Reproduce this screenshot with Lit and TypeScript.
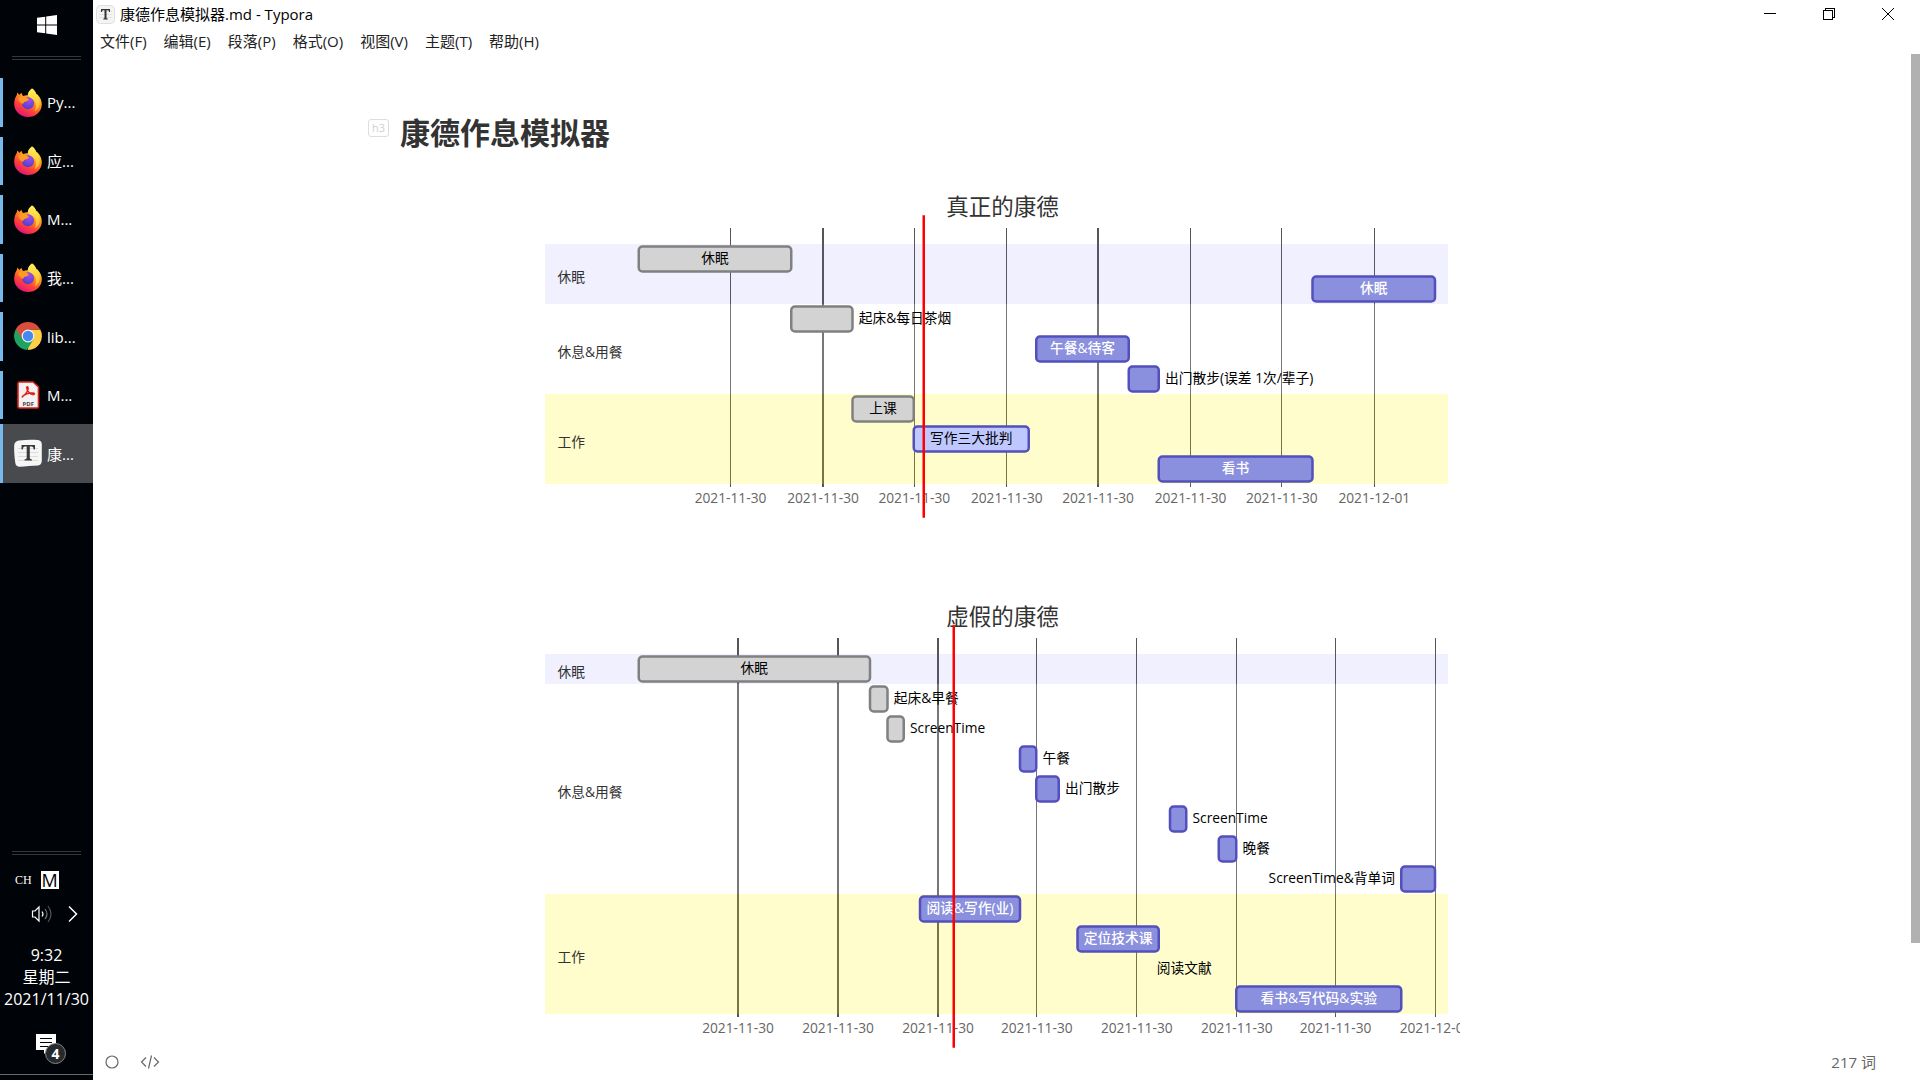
import { LitElement, css, html, svg, nothing } from "lit";
import { customElement, property } from "lit/decorators.js";

type State = "done" | "active" | "todo" | "hidden";
type Side = "in" | "right" | "left";

interface Task {
  name: string;
  start: number;
  end: number;
  state: State;
  label: Side;
}

interface Section {
  name: string;
  tint: string;
  rows: number;
}

interface Plan {
  title: string;
  from: number;
  to: number;
  now: number;
  sections: Section[];
  tasks: Task[];
}

const task = (name: string, start: number, end: number, state: State, label: Side): Task => ({
  name,
  start,
  end,
  state,
  label,
});

/* Hours are counted from midnight; a task's row is its place in the list. */
const PLANS: Plan[] = [
  {
    title: "真正的康德",
    from: 0.01,
    to: 26,
    now: 9.3,
    sections: [
      { name: "休眠", tint: "s0", rows: 2 },
      { name: "休息&用餐", tint: "s1", rows: 3 },
      { name: "工作", tint: "s2", rows: 3 },
    ],
    tasks: [
      task("休眠", 0.01, 5, "done", "in"),
      task("休眠", 22, 26, "todo", "in"),
      task("起床&每日茶烟", 5, 7, "done", "right"),
      task("午餐&待客", 13, 16, "todo", "in"),
      task("出门散步(误差 1次/辈子)", 16, 17, "todo", "right"),
      task("上课", 7, 9, "done", "in"),
      task("写作三大批判", 9, 12.75, "active", "in"),
      task("看书", 17, 22, "todo", "in"),
    ],
  },
  {
    title: "虚假的康德",
    from: 0.01,
    to: 24,
    now: 9.5,
    sections: [
      { name: "休眠", tint: "s0", rows: 1 },
      { name: "休息&用餐", tint: "s1", rows: 7 },
      { name: "工作", tint: "s2", rows: 4 },
    ],
    tasks: [
      task("休眠", 0.01, 6.98, "done", "in"),
      task("起床&早餐", 6.98, 7.5, "done", "right"),
      task("ScreenTime", 7.5, 8, "done", "right"),
      task("午餐", 11.5, 12, "todo", "right"),
      task("出门散步", 12, 12.66, "todo", "right"),
      task("ScreenTime", 16, 16.5, "todo", "right"),
      task("晚餐", 17.5, 18, "todo", "right"),
      task("ScreenTime&背单词", 23, 24, "todo", "left"),
      task("阅读&写作(业)", 8.5, 11.5, "todo", "in"),
      task("定位技术课", 13.22, 15.67, "todo", "in"),
      task("阅读文献", 16.2, 16.7, "hidden", "in"),
      task("看书&写代码&实验", 18, 23, "todo", "in"),
    ],
  },
];

const WIDTH = 732;
const LEFT = 75;
const RANGE = 637;
const TOP = 50;
const ROW = 24;
const BAR = 20;

@customElement("gantt-chart")
export class GanttChart extends LitElement {
  @property({ attribute: false }) plan!: Plan;

  static styles = css`
    :host {
      display: block;
    }
    svg {
      display: block;
      width: 100%;
      height: auto;
      font-family: "Open Sans", "Noto Sans CJK SC", sans-serif;
      font-size: 11px;
    }
    .title {
      font-size: 18px;
      text-anchor: middle;
      fill: #333;
    }
    .grid {
      stroke: #555;
      stroke-width: 1;
      shape-rendering: crispEdges;
    }
    .date {
      text-anchor: middle;
      fill: #666;
    }
    .band {
      opacity: 0.2;
      shape-rendering: crispEdges;
    }
    .s0 {
      fill: rgba(102, 102, 255, 0.49);
    }
    .s1 {
      fill: #fff;
    }
    .s2 {
      fill: #fff400;
    }
    .section {
      fill: #333;
      dominant-baseline: central;
    }
    .bar {
      stroke-width: 2;
    }
    .done {
      fill: #d3d3d3;
      stroke: #808080;
    }
    .active {
      fill: #bfc7ff;
      stroke: #534fbc;
    }
    .todo {
      fill: #8a90dd;
      stroke: #534fbc;
    }
    .label {
      fill: #000;
    }
    .label.in {
      text-anchor: middle;
    }
    .label.left {
      text-anchor: end;
    }
    .label.light {
      fill: #fff;
      font-weight: 500;
    }
    .now {
      stroke: #f00;
      stroke-width: 2;
    }
  `;

  private x(hour: number): number {
    const { from, to } = this.plan;
    return LEFT + Math.round(((hour - from) / (to - from)) * RANGE);
  }

  private labelX(t: Task): number {
    if (t.label === "right") return this.x(t.end) + 5;
    if (t.label === "left") return this.x(t.start) - 5;
    return (this.x(t.start) + this.x(t.end)) / 2;
  }

  render() {
    const { title, sections, tasks, now } = this.plan;
    const height = tasks.length * ROW + TOP * 2;
    const floor = height - TOP;
    const hours = [3, 6, 9, 12, 15, 18, 21, 24];
    const nowX = this.x(now);
    let row = 0;
    const bands = sections.map((s) => {
      const first = row;
      row += s.rows;
      return { ...s, first };
    });
    return html`
      <svg viewBox="0 0 ${WIDTH} ${height}" role="img" aria-label=${title}>
        ${hours.map((h) => {
          const x = this.x(h) + 0.4;
          return svg`
            <line class="grid" x1=${x} x2=${x} y1="35" y2=${floor}></line>
            <text class="date" x=${x} y=${floor + 13}>${h < 24 ? "2021-11-30" : "2021-12-01"}</text>`;
        })}
        ${bands.map(
          (b) => svg`<rect class="band ${b.tint}" x="0" y=${b.first * ROW + TOP - 2}
            width=${WIDTH - 10} height=${b.rows * ROW}></rect>`
        )}
        ${tasks.map((t, i) =>
          t.state === "hidden"
            ? nothing
            : svg`<rect class="bar ${t.state}" rx="3" x=${this.x(t.start)} y=${i * ROW + TOP}
                width=${this.x(t.end) - this.x(t.start)} height=${BAR}></rect>`
        )}
        ${tasks.map(
          (t, i) => svg`<text
            class="label ${t.label} ${t.state === "todo" && t.label === "in" ? "light" : ""}"
            x=${this.labelX(t)} y=${i * ROW + TOP + 13}>${t.name}</text>`
        )}
        ${bands.map(
          (b) => svg`<text class="section" x="10"
            y=${b.first * ROW + (b.rows * ROW) / 2 + TOP}>${b.name}</text>`
        )}
        <text class="title" x=${WIDTH / 2} y="25">${title}</text>
        <line class="now" x1=${nowX} x2=${nowX} y1="25" y2=${height - 25}></line>
      </svg>
    `;
  }
}

const firefox = svg`
  <defs>
    <linearGradient id="fxBody" x1="0.8" y1="0.1" x2="0.3" y2="1">
      <stop offset="0" stop-color="#ffe93e"></stop>
      <stop offset="0.35" stop-color="#ff9a1f"></stop>
      <stop offset="0.68" stop-color="#ff4338"></stop>
      <stop offset="1" stop-color="#e0107e"></stop>
    </linearGradient>
    <linearGradient id="fxFlame" x1="0" y1="0" x2="0" y2="1">
      <stop offset="0" stop-color="#fff25a"></stop>
      <stop offset="1" stop-color="#ffb52a"></stop>
    </linearGradient>
    <radialGradient id="fxCore" cx="0.6" cy="0.25" r="0.8">
      <stop offset="0" stop-color="#a24cf0"></stop>
      <stop offset="1" stop-color="#4b3fc4"></stop>
    </radialGradient>
  </defs>
  <path fill="url(#fxBody)" d="M18 0.5c2.6 1.6 3.6 3.8 4.4 5.7 0.9-0.2 1.2 0.3 1.9 1.2 2.4 2.6 3.5 5.6 3.5 9C27.800 23.500 21.500 29 14 29S0.200 23.400 0.200 16c0-3.600 0.900-6.500 2.600-9l0.500-2.600c0.900 0.700 1.500 1.500 1.900 2.500 0.700-0.700 1.600-1.400 2.400-1.800 0.200 1.200 0.700 2.200 1.600 3 1.400-0.700 3-1.100 4.600-0.900C14.100 4.700 15.500 2.200 18 0.500z"></path>
  <path fill="url(#fxFlame)" d="M18 0.500c2.600 1.600 3.600 3.800 4.400 5.700 2.800 3.400 3.900 7.200 2.900 11.200-0.800 3-2.500 4.700-4.500 5.800 1.700-3.700 1.500-7.600-0.400-10.400-1.700-2.500-5.500-3.400-6.600-5.600C13.900 4.700 15.500 2.200 18 0.500z"></path>
  <circle cx="14" cy="15.300" r="6" fill="url(#fxCore)"></circle>
  <path fill="#ff9a22" d="M4.200 10.200c2.200-2 5.300-2.400 8-1 0.900 0.500 1.700 1.500 2.700 1.700-0.300 1.700-2 2-3.400 2.500-1.500 0.500-2 1.500-2.500 2.600-2.200-1-4.300-3-4.800-5.800z"></path>`;

const chrome = svg`
  <path fill="#ffcd46" d="M14 14 L14 7.500 L26.300 7.500 A14 14 0 0 1 14 28 Z"></path>
  <path fill="#1da462" d="M14 14 L1.900 7 A14 14 0 0 0 13 28 L19.600 17.200 Z"></path>
  <path fill="#db4c3f" d="M1.900 7 L8.400 17.200 L14 7.500 H26.300 A14 14 0 0 0 1.900 7z"></path>
  <circle cx="14" cy="14" r="6.400" fill="#f1f1f1"></circle>
  <circle cx="14" cy="14" r="5.200" fill="#4688f1"></circle>`;

const pdf = svg`
  <path fill="#f3f1f1" stroke="#e2231a" stroke-width="1.600" d="M5.500 1 H19 L24.500 6 V25.500 Q24.500 27 23 27 H5.500 Q4 27 4 25.500 V2.500 Q4 1 5.500 1z"></path>
  <path fill="none" stroke="#e2231a" stroke-width="1.500" d="M8.500 15.500 C11.500 14 15.200 8.500 13.800 6.200 C12.400 4.200 12 8.500 15 11.500 C17.500 14 20.500 14 20.500 12.700 C20.300 11 13 12.200 10.200 14.200 C8 15.800 8 16.500 8.500 15.500z"></path>
  <text x="14.200" y="24.500" text-anchor="middle" font-size="6" font-weight="700" fill="#444" font-family="Open Sans, sans-serif">PDF</text>`;

const typora = svg`
  <path fill="#f6f6f6" d="M5 1.500 C12 0.500 19 0.500 24 1 Q27.500 1.500 27.800 5 V22 Q27.500 26 24 26.500 C18 26.500 11 27.500 6 27.800 Q2 28 1.300 24 C0.300 17 0 11 0.200 6 Q0.800 2.200 5 1.500z"></path>
  <path stroke="#dcdcdc" d="M4 9.500H24M4 13.500H24M4 17.500H24M4 21.500H24"></path>
  <path fill="#3a3a3a" d="M7.500 6 H21 V10.500 H19.800 Q19.500 7.600 17.800 7.600 H15.800 V19 Q15.800 20.300 18 20.400 V21.500 H10.500 V20.400 Q12.700 20.300 12.700 19 V7.600 H10.700 Q9 7.600 8.700 10.500 H7.500z"></path>`;

const APPS = [
  { icon: firefox, text: "Py..." },
  { icon: firefox, text: "应..." },
  { icon: firefox, text: "M..." },
  { icon: firefox, text: "我..." },
  { icon: chrome, text: "lib..." },
  { icon: pdf, text: "M..." },
  { icon: typora, text: "康...", current: true },
];

@customElement("task-bar")
export class TaskBar extends LitElement {
  static styles = css`
    :host {
      display: flex;
      flex-direction: column;
      background: #000307;
      color: #fff;
      font-family: "Open Sans", "Noto Sans CJK SC", sans-serif;
    }
    button {
      border: 0;
      padding: 0;
      background: none;
      color: inherit;
      font: inherit;
      cursor: pointer;
    }
    svg {
      display: block;
    }
    .start {
      display: grid;
      place-items: center;
      height: 50px;
    }
    .rule {
      height: 2px;
      margin: 6px 12px 0;
      border: solid #34383a;
      border-width: 1px 0;
    }
    .apps {
      display: grid;
      grid-template-rows: repeat(7, 1fr);
      height: 410px;
      margin-top: 13px;
    }
    .app {
      position: relative;
      display: flex;
      align-items: center;
      gap: 5px;
      padding-left: 14px;
      font-size: 15px;
      white-space: nowrap;
    }
    .app::before {
      content: "";
      position: absolute;
      left: 0;
      top: 5px;
      bottom: 5px;
      width: 3px;
      background: #76b9ed;
    }
    .app.current {
      background: #484a4d;
    }
    .app.current::before {
      top: 0;
      bottom: 0;
    }
    .tray {
      margin-top: auto;
    }
    .row {
      display: flex;
      align-items: center;
    }
    .ime {
      gap: 9px;
      padding-left: 15px;
      margin-top: 16px;
    }
    .lang {
      font: 12px "Liberation Serif", serif;
    }
    .mode {
      width: 18px;
      height: 18px;
      background: #fff;
      color: #000;
      font-size: 18px;
      line-height: 18px;
    }
    .sound {
      gap: 15px;
      padding-left: 31px;
      margin-top: 15px;
    }
    .clock {
      display: block;
      width: 100%;
      margin-top: 20px;
      font-size: 16px;
      line-height: 22px;
      text-align: center;
      white-space: nowrap;
    }
    .clock span {
      display: block;
    }
    .notes {
      display: block;
      margin: 23px 0 0 35px;
    }
    .desktop {
      height: 5px;
      margin-top: 9px;
      border-top: 1px solid #666a6c;
    }
  `;

  render() {
    return html`
      <button class="start" aria-label="开始">
        <svg width="20" height="20" viewBox="0 0 20 20" fill="#fff">
          <path d="M0 2.800 L8.200 1.700 V9.500 H0z M9.200 1.500 L20 0 V9.500 H9.200z M0 10.500 H8.200 V18.300 L0 17.200z M9.200 10.500 H20 V20 L9.200 18.500z"></path>
        </svg>
      </button>
      <div class="rule"></div>
      <nav class="apps">
        ${APPS.map(
          (a) => html`<button class="app ${a.current ? "current" : ""}">
            <svg width="28" height="29" viewBox="0 0 28 29">${a.icon}</svg>
            <span>${a.text}</span>
          </button>`
        )}
      </nav>
      <div class="tray">
        <div class="rule"></div>
        <div class="row ime">
          <button class="lang">CH</button>
          <button class="mode">M</button>
        </div>
        <div class="row sound">
          <button aria-label="音量">
            <svg width="22" height="20" viewBox="0 0 22 20" fill="none" stroke="#fff" stroke-width="1.200">
              <path d="M1.500 7 H4 L8 3 V17 L4 13 H1.500z"></path>
              <path d="M11 7.500 Q13 10 11 12.500"></path>
              <path stroke="#777" d="M14 5 Q18 10 14 15"></path>
              <path stroke="#555" d="M17 2 Q23 10 17 18"></path>
            </svg>
          </button>
          <button aria-label="显示隐藏的图标">
            <svg width="10" height="18" viewBox="0 0 10 18" fill="none" stroke="#fff" stroke-width="1.500">
              <path d="M1 1.500 L8.500 9 L1 16.500"></path>
            </svg>
          </button>
        </div>
        <button class="clock">
          <span>9:32</span>
          <span>星期二</span>
          <span>2021/11/30</span>
        </button>
        <button class="notes" aria-label="通知">
          <svg width="32" height="32" viewBox="0 0 32 32">
            <path fill="#fff" d="M1 1 H21 V17 H13 L9 21 V17 H1z"></path>
            <path stroke="#000307" d="M5 5.500 H17 M5 9.500 H17 M5 13.500 H17"></path>
            <circle cx="20.500" cy="20.500" r="10" fill="#262a2d" stroke="#85888a"></circle>
            <text x="20.500" y="25.500" text-anchor="middle" font-size="14" font-weight="700" fill="#fff">4</text>
          </svg>
        </button>
        <div class="desktop"></div>
      </div>
    `;
  }
}

@customElement("app-root")
export class AppRoot extends LitElement {
  static styles = css`
    :host {
      display: grid;
      grid-template-columns: 93px minmax(0, 1fr);
      height: 100vh;
      overflow: hidden;
      background: #fff;
      color: #000;
      font-family: "Open Sans", "Noto Sans CJK SC", sans-serif;
      font-size: 15px;
    }
    button {
      border: 0;
      padding: 0;
      background: none;
      color: inherit;
      font: inherit;
      cursor: pointer;
    }
    svg {
      display: block;
    }
    .window {
      position: relative;
      display: flex;
      flex-direction: column;
      min-height: 0;
    }
    .titlebar {
      display: flex;
      align-items: center;
      height: 28px;
      padding: 0 3px;
    }
    .name {
      margin-left: 5px;
      line-height: 20px;
      white-space: nowrap;
    }
    .controls {
      display: flex;
      gap: 1px;
      margin-left: auto;
    }
    .controls button {
      display: grid;
      place-items: center;
      width: 58px;
      height: 28px;
    }
    .menu {
      display: flex;
      align-items: center;
      gap: 17px;
      height: 26px;
      padding: 0 7px;
      color: #222;
    }
    .menu button {
      line-height: 20px;
      white-space: nowrap;
    }
    .body {
      display: flex;
      flex: 1;
      min-height: 0;
    }
    .page {
      flex: 1;
      min-width: 0;
      overflow: hidden;
    }
    .article {
      max-width: 1204px;
      margin: 0 auto;
      padding-top: 58px;
    }
    .heading {
      position: relative;
      margin: 0 0 30px;
      color: #333;
      font-size: 30px;
      font-weight: 700;
      line-height: 42px;
    }
    .level {
      position: absolute;
      left: -32px;
      top: 7px;
      box-sizing: border-box;
      width: 21px;
      height: 18px;
      border: 1px solid #ddd;
      border-radius: 3px;
      color: #d0d0d0;
      font-size: 11px;
      font-weight: 400;
      line-height: 16px;
      text-align: center;
    }
    .chart {
      margin: 0 144px 45px 145px;
    }
    .scroll {
      display: grid;
      grid-template-rows: 13fr 2fr;
      width: 9px;
    }
    .thumb {
      background: #b1b1b1;
    }
    .status {
      position: absolute;
      inset: auto 44px 0 12px;
      display: flex;
      align-items: center;
      gap: 21px;
      height: 36px;
      color: #666;
    }
    .count {
      margin-left: auto;
      padding-bottom: 2px;
    }
  `;

  render() {
    const menus = ["文件(F)", "编辑(E)", "段落(P)", "格式(O)", "视图(V)", "主题(T)", "帮助(H)"];
    return html`
      <task-bar></task-bar>
      <div class="window">
        <header class="titlebar">
          <svg width="19" height="19" viewBox="0 0 19 19">
            <rect x="0.500" y="0.500" width="18" height="18" rx="4" fill="#f4f4f4" stroke="#dedede"></rect>
            <path stroke="#e2e2e2" d="M3 6.500H16M3 9.500H16M3 12.500H16"></path>
            <path fill="#333" d="M5 4 H14 V7 H13.200 Q13 5.200 12 5.200 H10.500 V12.800 Q10.500 13.700 11.800 13.800 V14.500 H7.200 V13.800 Q8.500 13.700 8.500 12.800 V5.200 H7 Q6 5.200 5.800 7 H5z"></path>
          </svg>
          <span class="name">康德作息模拟器.md - Typora</span>
          <div class="controls">
            <button aria-label="最小化">
              <svg width="12" height="12" viewBox="0 0 12 12" stroke="#000" shape-rendering="crispEdges">
                <path d="M0 5.500 H12"></path>
              </svg>
            </button>
            <button aria-label="还原">
              <svg width="12" height="12" viewBox="0 0 12 12" fill="none" stroke="#000" shape-rendering="crispEdges">
                <path d="M0.500 2.500 H9.500 V11.500 H0.500z M2.500 2.500 V0.500 H11.500 V9.500 H9.500"></path>
              </svg>
            </button>
            <button aria-label="关闭">
              <svg width="12" height="12" viewBox="0 0 12 12" stroke="#000">
                <path d="M0 0 L12 12 M12 0 L0 12"></path>
              </svg>
            </button>
          </div>
        </header>
        <nav class="menu">${menus.map((m) => html`<button>${m}</button>`)}</nav>
        <div class="body">
          <main class="page">
            <article class="article">
              <h3 class="heading"><span class="level">h3</span>康德作息模拟器</h3>
              ${PLANS.map((p) => html`<gantt-chart class="chart" .plan=${p}></gantt-chart>`)}
            </article>
          </main>
          <div class="scroll"><div class="thumb"></div></div>
        </div>
        <footer class="status">
          <button aria-label="侧边栏">
            <svg width="14" height="14" viewBox="0 0 14 14" fill="none" stroke="#666" stroke-width="1.200">
              <circle cx="7" cy="7" r="6"></circle>
            </svg>
          </button>
          <button aria-label="源代码模式">
            <svg width="20" height="14" viewBox="0 0 20 14" fill="none" stroke="#666" stroke-width="1.200">
              <path d="M6 2.500 L1.500 7 L6 11.500 M14 2.500 L18.500 7 L14 11.500 M11.500 0.500 L8.500 13.500"></path>
            </svg>
          </button>
          <span class="count">217 词</span>
        </footer>
      </div>
    `;
  }
}
